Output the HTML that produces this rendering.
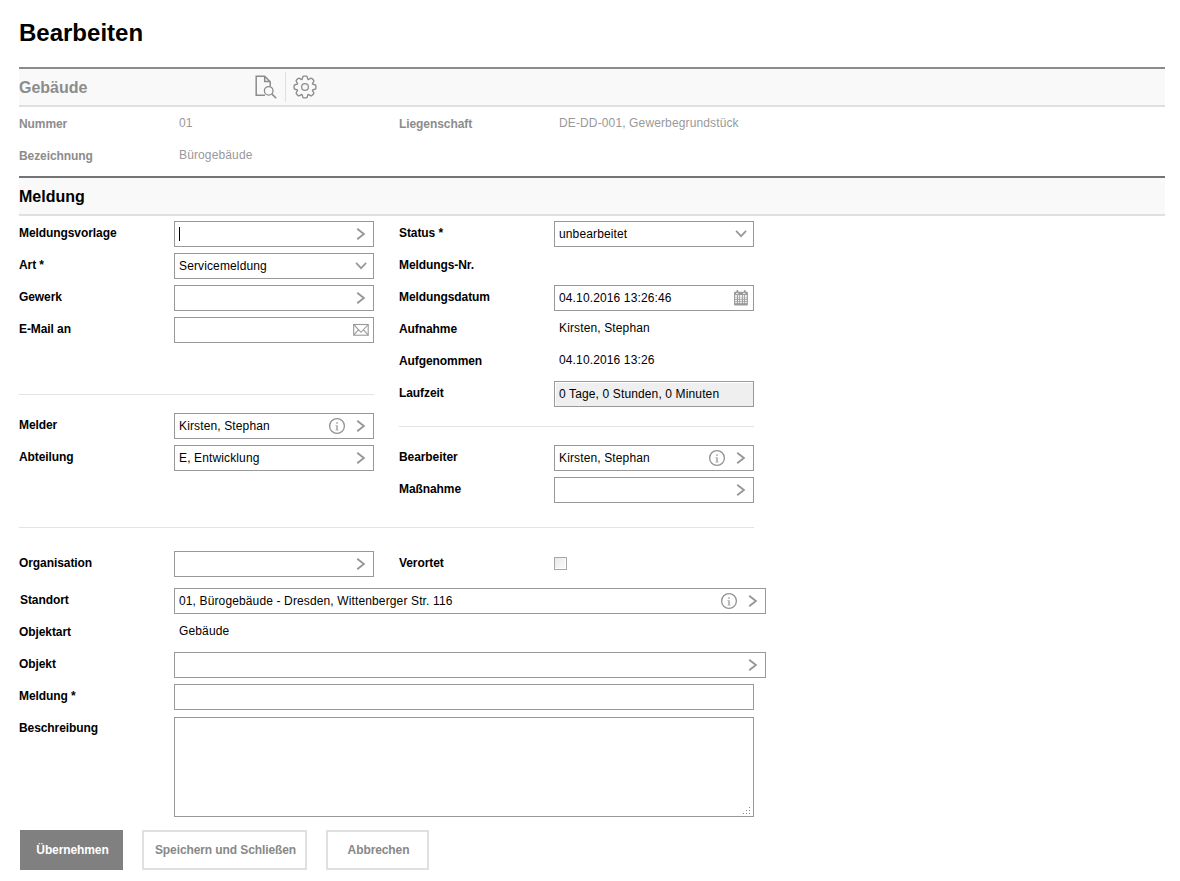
<!DOCTYPE html>
<html><head><meta charset="utf-8">
<style>
html,body{margin:0;padding:0;background:#fff;}
body{width:1180px;height:881px;overflow:hidden;position:relative;font-family:"Liberation Sans",sans-serif;font-size:12px;color:#000;}
.a{position:absolute;white-space:nowrap;}
h1{position:absolute;margin:0;left:19px;top:17px;font-size:24px;font-weight:bold;line-height:32px;}
.bar{position:absolute;left:19px;width:1146px;height:36px;border-top:2px solid #8b8b8b;border-bottom:2px solid #e0e0e0;background:#f9f9f9;}
.bar .t{position:absolute;left:0;top:9px;font-size:16px;font-weight:bold;line-height:20px;}
.l{position:absolute;white-space:nowrap;font-weight:bold;line-height:14px;letter-spacing:-0.08px;}
.g{color:#8c8c8c;}
.v{position:absolute;white-space:nowrap;line-height:14px;letter-spacing:0.13px;}
.gv{color:#999;}
.in{position:absolute;box-sizing:border-box;height:26px;border:1px solid #999;background:#fff;}
.in .tx{position:absolute;left:4px;top:5px;line-height:14px;white-space:nowrap;letter-spacing:0.13px;}
.sep{position:absolute;height:1px;background:#e3e3e3;}
.ic{position:absolute;}
.btn{position:absolute;box-sizing:border-box;top:830px;height:40px;font-weight:bold;text-align:center;line-height:36px;padding-left:2px;letter-spacing:-0.1px;}
</style></head><body>
<h1>Bearbeiten</h1>

<div class="bar" style="top:67px"><div class="t g">Gebäude</div></div>

<div class="l g" style="left:19px;top:117px">Nummer</div>
<div class="v gv" style="left:179px;top:116px">01</div>
<div class="l g" style="left:399px;top:117px">Liegenschaft</div>
<div class="v gv" style="left:559px;top:116px">DE-DD-001, Gewerbegrundstück</div>
<div class="l g" style="left:19px;top:149px">Bezeichnung</div>
<div class="v gv" style="left:179px;top:148px">Bürogebäude</div>

<div class="bar" style="top:176px;border-top-color:#747474"><div class="t">Meldung</div></div>

<!-- left col -->
<div class="l" style="left:19px;top:226px">Meldungsvorlage</div>
<div class="in" style="left:174px;top:221px;width:200px"></div>
<div class="l" style="left:19px;top:258px">Art *</div>
<div class="in" style="left:174px;top:253px;width:200px"><div class="tx">Servicemeldung</div></div>
<div class="l" style="left:19px;top:290px">Gewerk</div>
<div class="in" style="left:174px;top:285px;width:200px"></div>
<div class="l" style="left:19px;top:322px">E-Mail an</div>
<div class="in" style="left:174px;top:317px;width:200px"></div>

<div class="sep" style="left:19px;top:394px;width:355px"></div>

<div class="l" style="left:19px;top:418px">Melder</div>
<div class="in" style="left:174px;top:413px;width:200px"><div class="tx">Kirsten, Stephan</div></div>
<div class="l" style="left:19px;top:450px">Abteilung</div>
<div class="in" style="left:174px;top:445px;width:200px"><div class="tx">E, Entwicklung</div></div>

<!-- right col -->
<div class="l" style="left:399px;top:226px">Status *</div>
<div class="in" style="left:554px;top:221px;width:200px"><div class="tx">unbearbeitet</div></div>
<div class="l" style="left:399px;top:258px">Meldungs-Nr.</div>
<div class="l" style="left:399px;top:290px">Meldungsdatum</div>
<div class="in" style="left:554px;top:285px;width:200px"><div class="tx">04.10.2016 13:26:46</div></div>
<div class="l" style="left:399px;top:322px">Aufnahme</div>
<div class="v" style="left:559px;top:321px">Kirsten, Stephan</div>
<div class="l" style="left:399px;top:354px">Aufgenommen</div>
<div class="v" style="left:559px;top:353px">04.10.2016 13:26</div>
<div class="l" style="left:399px;top:386px">Laufzeit</div>
<div class="in" style="left:554px;top:381px;width:200px;background:#efefef;box-shadow:inset 1px 1px 0 #fff"><div class="tx">0 Tage, 0 Stunden, 0 Minuten</div></div>

<div class="sep" style="left:399px;top:426px;width:355px"></div>

<div class="l" style="left:399px;top:450px">Bearbeiter</div>
<div class="in" style="left:554px;top:445px;width:200px"><div class="tx">Kirsten, Stephan</div></div>
<div class="l" style="left:399px;top:482px">Maßnahme</div>
<div class="in" style="left:554px;top:477px;width:200px"></div>

<div class="sep" style="left:19px;top:527px;width:735px"></div>

<div class="l" style="left:19px;top:556px">Organisation</div>
<div class="in" style="left:174px;top:551px;width:200px"></div>
<div class="l" style="left:399px;top:556px">Verortet</div>
<div class="a" style="left:554px;top:557px;width:11px;height:11px;border:1px solid #a6a6a6;background:linear-gradient(135deg,#e9e9e9,#fcfcfc);box-shadow:inset -1px -1px 0 #fff"></div>

<div class="l" style="left:20px;top:593px">Standort</div>
<div class="in" style="left:174px;top:588px;width:592px"><div class="tx">01, Bürogebäude - Dresden, Wittenberger Str. 116</div></div>
<div class="l" style="left:19px;top:625px">Objektart</div>
<div class="v" style="left:179px;top:624px">Gebäude</div>
<div class="l" style="left:19px;top:657px">Objekt</div>
<div class="in" style="left:174px;top:652px;width:592px"></div>
<div class="l" style="left:19px;top:689px">Meldung *</div>
<div class="in" style="left:174px;top:684px;width:580px"></div>
<div class="l" style="left:19px;top:721px">Beschreibung</div>
<div class="in" style="left:174px;top:717px;width:580px;height:100px"></div>

<div class="btn" style="left:20px;width:103px;background:#808080;color:#fff;border:2px solid #808080">Übernehmen</div>
<div class="btn" style="left:142px;width:165px;background:#fff;color:#888;border:2px solid #e0e0e0">Speichern und Schließen</div>
<div class="btn" style="left:326px;width:103px;background:#fff;color:#888;border:2px solid #e0e0e0">Abbrechen</div>
<svg class="a" style="left:0;top:0" width="1180" height="881" viewBox="0 0 1180 881">
<defs>
<path id="cr" d="M-16.8,7.8 L-10.1,13 L-16.8,18.2" fill="none" stroke="#959595" stroke-width="1.8"/>
<path id="cd" d="M-17.9,9.8 L-12.9,15.1 L-7.9,9.8" fill="none" stroke="#999" stroke-width="1.75"/>
<g id="inf"><circle cx="-37" cy="13" r="7.4" fill="none" stroke="#929292" stroke-width="1.3"/>
<rect x="-37.8" y="9.2" width="1.6" height="1.6" fill="#aaa"/>
<path d="M-38.6,12.2 L-36.2,12.2 L-36.2,16.8 L-35.4,16.8 L-35.4,17.6 L-38.6,17.6 L-38.6,16.8 L-37.8,16.8 L-37.8,13 L-38.6,13 Z" fill="#aaa"/></g>
</defs>
<use href="#cr" transform="translate(374,221)"/>
<use href="#cd" transform="translate(374,253)"/>
<use href="#cr" transform="translate(374,285)"/>
<g transform="translate(374,317)" fill="none" stroke="#999" stroke-width="1.1">
<rect x="-20.3" y="7.5" width="14.5" height="10.7"/>
<path d="M-20.3,7.5 L-13,15.3 L-5.8,7.5 M-20.3,18.2 L-15.6,12.9 M-5.8,18.2 L-10.4,12.9"/>
</g>
<use href="#inf" transform="translate(374,413)"/><use href="#cr" transform="translate(374,413)"/>
<use href="#cr" transform="translate(374,445)"/>
<use href="#cr" transform="translate(374,551)"/>
<use href="#cd" transform="translate(754,221)"/>
<g transform="translate(754,285)">
<rect x="-20" y="6.7" width="13.9" height="13.9" rx="1" fill="#9a9a9a"/>
<rect x="-17.6" y="4.9" width="1.9" height="3" rx="0.8" fill="#9a9a9a"/><rect x="-10.2" y="4.9" width="1.9" height="3" rx="0.8" fill="#9a9a9a"/>
<g fill="#f0f0f0"><rect x="-18.92" y="10.0" width="1.9" height="2.7"/><rect x="-16.06" y="10.0" width="1.23" height="2.7"/><rect x="-14.15" y="10.0" width="2.3" height="2.7"/><rect x="-11.02" y="10.0" width="1.1" height="2.7"/><rect x="-9.11" y="10.0" width="1.9" height="2.7"/><rect x="-18.92" y="13.1" width="1.9" height="1.1"/><rect x="-16.06" y="13.1" width="1.23" height="1.1"/><rect x="-14.15" y="13.1" width="2.3" height="1.1"/><rect x="-11.02" y="13.1" width="1.1" height="1.1"/><rect x="-9.11" y="13.1" width="1.9" height="1.1"/><rect x="-18.92" y="14.9" width="1.9" height="1.36"/><rect x="-16.06" y="14.9" width="1.23" height="1.36"/><rect x="-14.15" y="14.9" width="2.3" height="1.36"/><rect x="-11.02" y="14.9" width="1.1" height="1.36"/><rect x="-9.11" y="14.9" width="1.9" height="1.36"/><rect x="-18.92" y="16.94" width="1.9" height="1.23"/><rect x="-16.06" y="16.94" width="1.23" height="1.23"/><rect x="-14.15" y="16.94" width="2.3" height="1.23"/><rect x="-11.02" y="16.94" width="1.1" height="1.23"/><rect x="-9.11" y="16.94" width="1.9" height="1.23"/>
<rect x="-18.1" y="7.9" width="2.4" height="1.2" fill="#e6e6e6"/><rect x="-11" y="7.9" width="2.4" height="1.2" fill="#e6e6e6"/>
</g></g>
<use href="#inf" transform="translate(754,445)"/><use href="#cr" transform="translate(754,445)"/>
<use href="#cr" transform="translate(754,477)"/>
<use href="#inf" transform="translate(766,588)"/><use href="#cr" transform="translate(766,588)"/>
<use href="#cr" transform="translate(766,652)"/>
<rect x="179" y="227" width="1" height="14" fill="#000"/>
<g fill="#888"><rect x="749" y="807" width="1" height="1"/><rect x="746" y="810" width="1" height="1"/><rect x="749" y="810" width="1" height="1"/><rect x="743" y="813" width="1" height="1"/><rect x="746" y="813" width="1" height="1"/><rect x="749" y="813" width="1" height="1"/></g>
<g fill="none" stroke="#8c8c8c">
<path d="M265,95.2 L256.2,95.2 L256.2,76.2 L264.7,76.2 L270.2,81.7 L270.2,86.6 M264.7,76.2 L264.7,81.4 L270.2,81.4" stroke-width="1.5"/>
<circle cx="268.7" cy="90.85" r="4.3" stroke-width="1.3"/>
<path d="M271.8,93.9 L276.2,98.3" stroke-width="1.6"/>
<path transform="translate(305,87)" stroke-width="1.35" stroke-linejoin="round" d="M-3.08,-7.49 Q-2.90,-7.56 -2.67,-8.43 L-2.23,-10.05 Q-2.00,-10.92 -1.10,-10.92 L1.10,-10.92 Q2.00,-10.92 2.23,-10.05 L2.67,-8.43 Q2.90,-7.56 3.08,-7.49 L3.12,-7.47 Q3.30,-7.40 4.08,-7.85 L5.53,-8.68 Q6.31,-9.13 6.94,-8.50 L8.50,-6.94 Q9.13,-6.31 8.68,-5.53 L7.85,-4.08 Q7.40,-3.30 7.47,-3.12 L7.49,-3.08 Q7.56,-2.90 8.43,-2.67 L10.05,-2.23 Q10.92,-2.00 10.92,-1.10 L10.92,1.10 Q10.92,2.00 10.05,2.23 L8.43,2.67 Q7.56,2.90 7.49,3.08 L7.47,3.12 Q7.40,3.30 7.85,4.08 L8.68,5.53 Q9.13,6.31 8.50,6.94 L6.94,8.50 Q6.31,9.13 5.53,8.68 L4.08,7.85 Q3.30,7.40 3.12,7.47 L3.08,7.49 Q2.90,7.56 2.67,8.43 L2.23,10.05 Q2.00,10.92 1.10,10.92 L-1.10,10.92 Q-2.00,10.92 -2.23,10.05 L-2.67,8.43 Q-2.90,7.56 -3.08,7.49 L-3.12,7.47 Q-3.30,7.40 -4.08,7.85 L-5.53,8.68 Q-6.31,9.13 -6.94,8.50 L-8.50,6.94 Q-9.13,6.31 -8.68,5.53 L-7.85,4.08 Q-7.40,3.30 -7.47,3.12 L-7.49,3.08 Q-7.56,2.90 -8.43,2.67 L-10.05,2.23 Q-10.92,2.00 -10.92,1.10 L-10.92,-1.10 Q-10.92,-2.00 -10.05,-2.23 L-8.43,-2.67 Q-7.56,-2.90 -7.49,-3.08 L-7.47,-3.12 Q-7.40,-3.30 -7.85,-4.08 L-8.68,-5.53 Q-9.13,-6.31 -8.50,-6.94 L-6.94,-8.50 Q-6.31,-9.13 -5.53,-8.68 L-4.08,-7.85 Q-3.30,-7.40 -3.12,-7.47 Z"/>
<circle cx="305" cy="87" r="3.35" stroke-width="1.25"/>
</g>
<rect x="285" y="72" width="1" height="30" fill="#e0e0e0"/>
</svg>
</body></html>
